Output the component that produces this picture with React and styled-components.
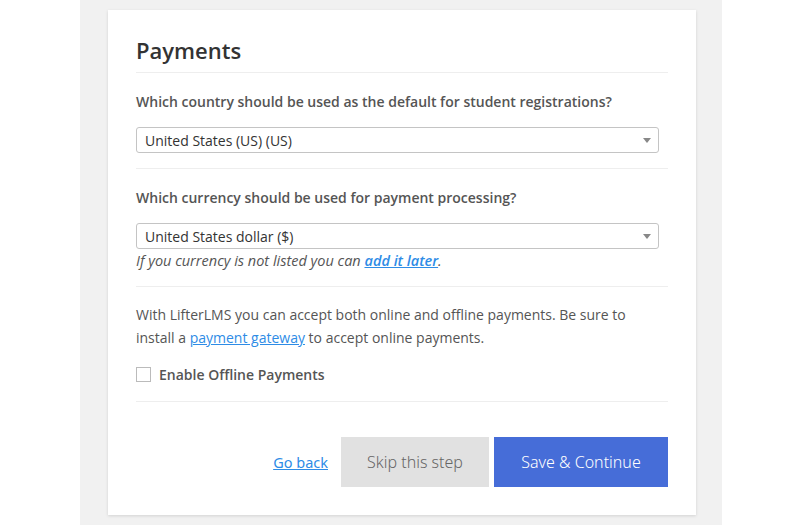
import React, { useState } from "react";
import styled, { createGlobalStyle } from "styled-components";

const GlobalStyle = createGlobalStyle`
  html, body {
    margin: 0;
    padding: 0;
    background: #fff;
    font-family: "Open Sans", "Noto Sans", sans-serif;
  }
`;

const Backdrop = styled.div`
  width: 642px;
  height: 525px;
  margin: 0 auto 0 80px;
  background: #f1f1f1;
  padding: 10px 26px 0 28px;
  box-sizing: border-box;
`;

const Card = styled.div`
  width: 588px;
  height: 505px;
  background: #fff;
  box-shadow: 0 1px 3px rgba(0, 0, 0, 0.13);
  padding: 24px 28px 0;
  box-sizing: border-box;
  color: #555;
`;

const Title = styled.h1`
  margin: 0;
  font-size: 22px;
  font-weight: 600;
  color: #333;
  line-height: 32px;
  padding-bottom: 6px;
`;

const Section = styled.div`
  border-top: 1px solid #eee;
  padding: ${(p) => p.$pad || "16px 0 15px"};
`;

const Question = styled.p`
  margin: 0 0 12px;
  font-size: 14px;
  font-weight: 600;
  line-height: 26px;
  color: #555;
`;

const SelectBox = styled.div`
  position: relative;
  width: 523px;
  height: 26px;
  border: 1px solid #c4c4c4;
  border-radius: 3px;
  box-sizing: border-box;
  display: flex;
  align-items: center;
  padding: 0 8px;
  font-size: 14px;
  color: #333;
  cursor: pointer;
`;

const Arrow = styled.span`
  position: absolute;
  right: 7px;
  top: 10px;
  width: 0;
  height: 0;
  border-left: 4px solid transparent;
  border-right: 4px solid transparent;
  border-top: 5px solid #888;
`;

const Note = styled.p`
  margin: 1px 0 0;
  font-size: 14.5px;
  font-style: italic;
  line-height: 22px;
  color: #555;
`;

const Link = styled.a`
  color: #2e8ce6;
  font-weight: ${(p) => (p.$bold ? 600 : 400)};
  text-decoration: underline;
  cursor: pointer;
`;

const Text = styled.p`
  margin: 0 0 16px;
  max-width: 515px;
  font-size: 14px;
  line-height: 22.5px;
  color: #555;
`;

const CheckRow = styled.label`
  display: flex;
  align-items: center;
  gap: 8px;
  font-size: 14px;
  font-weight: 600;
  color: #555;
  cursor: pointer;
`;

const Box = styled.span`
  width: 15px;
  height: 15px;
  border: 1px solid #bbb;
  box-sizing: border-box;
  background: ${(p) => (p.$on ? "#466dd8" : "#fff")};
`;

const Actions = styled.div`
  border-top: 1px solid #eee;
  padding-top: 35px;
  display: flex;
  justify-content: flex-end;
  align-items: center;
  gap: 5px;
`;

const BackLink = styled.a`
  font-family: "Noto Sans", "Open Sans", sans-serif;
  font-size: 14.5px;
  color: #2e8ce6;
  text-decoration: underline;
  margin-right: 8px;
  cursor: pointer;
`;

const Button = styled.button`
  height: 50px;
  border: none;
  border-radius: 0;
  padding: 0;
  width: ${(p) => p.$w}px;
  background: ${(p) => (p.$primary ? "#466dd8" : "#e1e1e1")};
  color: ${(p) => (p.$primary ? "#fff" : "#666")};
  font-family: "Noto Sans", "Open Sans", sans-serif;
  font-size: 16px;
  font-weight: 300;
  cursor: pointer;
`;

export default function App() {
  const [offline, setOffline] = useState(false);

  return (
    <>
      <GlobalStyle />
      <Backdrop>
        <Card>
          <Title>Payments</Title>
          <Section>
            <Question>Which country should be used as the default for student registrations?</Question>
            <SelectBox>
              United States (US) (US)
              <Arrow />
            </SelectBox>
          </Section>
          <Section $pad="16px 0 14px">
            <Question>Which currency should be used for payment processing?</Question>
            <SelectBox>
              United States dollar ($)
              <Arrow />
            </SelectBox>
            <Note>
              If you currency is not listed you can <Link $bold>add it later</Link>.
            </Note>
          </Section>
          <Section $pad="17px 0 17px">
            <Text>
              With LifterLMS you can accept both online and offline payments. Be sure to install a{" "}
              <Link>payment gateway</Link> to accept online payments.
            </Text>
            <CheckRow onClick={() => setOffline(!offline)}>
              <Box $on={offline} />
              Enable Offline Payments
            </CheckRow>
          </Section>
          <Actions>
            <BackLink>Go back</BackLink>
            <Button $w={148}>Skip this step</Button>
            <Button $w={174} $primary>
              Save &amp; Continue
            </Button>
          </Actions>
        </Card>
      </Backdrop>
    </>
  );
}
